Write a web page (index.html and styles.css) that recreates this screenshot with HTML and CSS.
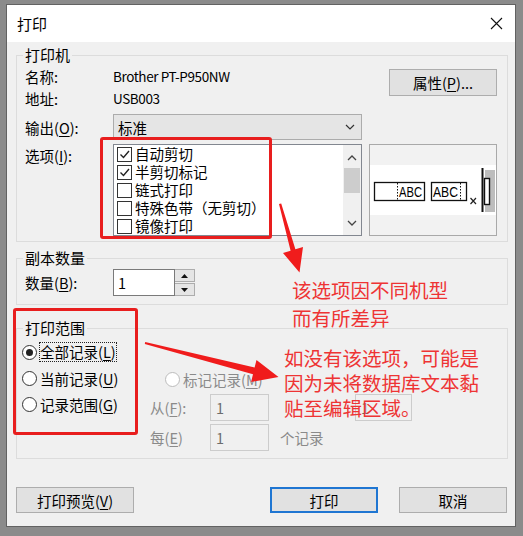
FILE: index.html
```html
<!DOCTYPE html>
<html>
    <head>
        <title>打印</title>
        <meta charset="UTF-8" />
        <link rel="stylesheet" href="styles.css">
    </head>
    <body>
        <div class="dialog">
            <div class="titlebar">
                <span class="title">打印</span>
                <svg class="close" width="13" height="13" viewBox="0 0 13 13">
                    <path d="M1 1L12 12M12 1L1 12" stroke="#111" stroke-width="1.1" fill="none"/>
                </svg>
            </div>
            <div class="content">
                <fieldset class="group printer">
                    <legend>打印机</legend>
                    <div class="printer-top">
                        <div class="info">
                            <div class="row"><span class="label">名称:</span><span class="latin">Brother PT-P950NW</span></div>
                            <div class="row"><span class="label">地址:</span><span class="latin">USB003</span></div>
                        </div>
                        <button class="btn btn-props">属性(<u>P</u>)...</button>
                    </div>
                    <div class="row output">
                        <span class="label">输出(<u>O</u>):</span>
                        <div class="select">
                            <span>标准</span>
                            <svg width="10" height="6" viewBox="0 0 10 6"><path d="M1 1L5 5L9 1" stroke="#333" stroke-width="1.2" fill="none"/></svg>
                        </div>
                    </div>
                    <div class="row options">
                        <span class="label option-label">选项(<u>I</u>):</span>
                        <div class="listbox">
                            <ul class="items">
                                <li><span class="check on"><svg width="13" height="13" viewBox="0 0 13 13"><path d="M2.5 6.5L5.5 9.5L11 3" stroke="#222" stroke-width="1.4" fill="none"/></svg></span>自动剪切</li>
                                <li><span class="check on"><svg width="13" height="13" viewBox="0 0 13 13"><path d="M2.5 6.5L5.5 9.5L11 3" stroke="#222" stroke-width="1.4" fill="none"/></svg></span>半剪切标记</li>
                                <li><span class="check"></span>链式打印</li>
                                <li><span class="check"></span>特殊色带（无剪切）</li>
                                <li><span class="check"></span>镜像打印</li>
                            </ul>
                            <div class="scrollbar">
                                <svg class="arrow-up" width="10" height="6" viewBox="0 0 10 6"><path d="M1 5L5 1L9 5" stroke="#444" stroke-width="1.3" fill="none"/></svg>
                                <div class="thumb"></div>
                                <div class="track"></div>
                                <svg class="arrow-down" width="10" height="6" viewBox="0 0 10 6"><path d="M1 1L5 5L9 1" stroke="#444" stroke-width="1.3" fill="none"/></svg>
                            </div>
                        </div>
                        <svg class="preview" width="128" height="92" viewBox="0 0 128 92">
                            <rect x="0.5" y="0.5" width="127" height="91" fill="#f2f2f2" stroke="#a9a9a9"/>
                            <rect x="1" y="21" width="126" height="50" fill="#fff"/>
                            <rect x="5.5" y="38.5" width="50" height="18" fill="#fff" stroke="#111" stroke-width="1.3"/>
                            <line x1="28.5" y1="39" x2="28.5" y2="56" stroke="#111" stroke-dasharray="1.5 1.5"/>
                            <text x="30" y="53" font-family="Liberation Sans" font-size="14" textLength="23" lengthAdjust="spacingAndGlyphs">ABC</text>
                            <rect x="62.5" y="38.5" width="35" height="18" fill="#fff" stroke="#111" stroke-width="1.3"/>
                            <line x1="91.5" y1="39" x2="91.5" y2="56" stroke="#111" stroke-dasharray="1.5 1.5"/>
                            <text x="64" y="53" font-family="Liberation Sans" font-size="14" textLength="25" lengthAdjust="spacingAndGlyphs">ABC</text>
                            <path d="M101.5 54L107 60M107 54L101.5 60" stroke="#222" stroke-width="1.2"/>
                            <rect x="116" y="26" width="10" height="42" fill="#bdbdbd"/>
                            <line x1="113.5" y1="24" x2="113.5" y2="68" stroke="#111" stroke-width="2"/>
                            <rect x="115.5" y="34.5" width="5" height="26" fill="#fff" stroke="#111" stroke-width="1.4"/>
                        </svg>
                    </div>
                </fieldset>

                <fieldset class="group copies">
                    <legend>副本数量</legend>
                    <div class="row">
                        <span class="label">数量(<u>B</u>):</span>
                        <div class="spin">
                            <div class="spin-input">1</div>
                            <div class="spin-buttons">
                                <div class="spin-btn"><svg width="7" height="4" viewBox="0 0 7 4"><path d="M0 4L3.5 0L7 4Z" fill="#111"/></svg></div>
                                <div class="spin-btn"><svg width="7" height="4" viewBox="0 0 7 4"><path d="M0 0L3.5 4L7 0Z" fill="#111"/></svg></div>
                            </div>
                        </div>
                    </div>
                </fieldset>

                <fieldset class="group range">
                    <legend>打印范围</legend>
                    <div class="range-grid">
                        <div class="radio-list">
                            <div class="radio-row"><span class="radio on"></span><span class="focus">全部记录(<u>L</u>)</span></div>
                            <div class="radio-row"><span class="radio"></span>当前记录(<u>U</u>)</div>
                            <div class="radio-row"><span class="radio"></span>记录范围(<u>G</u>)</div>
                        </div>
                        <div class="range-fields">
                            <div class="radio-row marked"><span class="radio disabled"></span>标记记录(<u>M</u>)</div>
                            <div class="field-row from">
                                <span class="field-label">从(<u>F</u>):</span>
                                <div class="field">1</div>
                                <div class="field to">1</div>
                            </div>
                            <div class="field-row every">
                                <span class="field-label">每(<u>E</u>)</span>
                                <div class="field">1</div>
                                <span class="unit">个记录</span>
                            </div>
                        </div>
                    </div>
                </fieldset>

                <div class="button-row">
                    <button class="btn btn-wide">打印预览(<u>V</u>)</button>
                    <button class="btn btn-default">打印</button>
                    <button class="btn">取消</button>
                </div>
            </div>
        </div>

        <div class="annotations">
            <div class="red-box box-options"></div>
            <div class="red-box box-range"></div>
            <svg class="arrows" width="523" height="536" viewBox="0 0 523 536">
                <polygon points="279,204 281.2,203.4 295.4,249.3 303,247 299.5,272.5 283,253 290.6,250.7" fill="#f01c1c"/>
                <polygon points="145.2,342 254.6,367.4 256.5,360 278.5,377 251.1,382 253,374.2 144.8,344" fill="#f01c1c"/>
            </svg>
            <div class="note note-model">该选项因不同机型<br>而有所差异</div>
            <div class="note note-range">如没有该选项，可能是<br>因为未将数据库文本黏<br>贴至编辑区域。</div>
        </div>
    </body>
</html>
```

FILE: styles.css
```css
body {
    margin: 0;
    padding: 4px 7px 9px 6px;
    background-color: #8b8b8b;
    font-family: "Noto Sans CJK SC", sans-serif;
    font-size: 14.5px;
    color: #000;
}
u {
    text-decoration-thickness: 1px;
    text-underline-offset: 2px;
}
.dialog {
    width: 510px;
    height: 523px;
    box-sizing: border-box;
    border: 1px solid #626262;
    background-color: #f0f0f0;
}
.titlebar {
    height: 37px;
    display: flex;
    align-items: center;
    justify-content: space-between;
    padding: 0 12px 0 10px;
    background-color: #fff;
    font-size: 15px;
}
.content {
    padding: 4px 7px 0 9px;
}
.group {
    margin: 0;
    padding: 1px 10px 5px 8px;
    border: 1px solid #dcdcdc;
    min-width: 0;
}
.group legend {
    padding: 0 2px;
    margin-left: -2px;
    font-size: 15px;
    line-height: 18px;
}
.row {
    display: flex;
    align-items: center;
}
.label {
    width: 88px;
    flex: none;
}
.latin {
    font-size: 13.5px;
    letter-spacing: -0.4px;
}
.printer-top {
    display: flex;
    justify-content: space-between;
    align-items: flex-start;
}
.info .row {
    height: 22px;
}
.btn {
    font-family: inherit;
    font-size: 14.5px;
    color: #000;
    background-color: #e1e1e1;
    border: 1px solid #adadad;
    padding: 0;
    height: 26px;
    width: 108px;
}
.btn-props {
    height: 27px;
    margin-top: 4px;
}
.output {
    margin-top: 5px;
}
.select {
    width: 249px;
    height: 26px;
    box-sizing: border-box;
    display: flex;
    align-items: center;
    justify-content: space-between;
    padding: 0 6px 0 4px;
    background-color: #e5e5e5;
    border: 1px solid #acacac;
}
.options {
    margin-top: 4px;
    align-items: flex-start;
}
.option-label {
    line-height: 24px;
}
.listbox {
    width: 249px;
    height: 92px;
    box-sizing: border-box;
    display: flex;
    background-color: #fff;
    border: 1px solid #828790;
}
.items {
    flex: 1;
    list-style: none;
    margin: 0;
    padding: 0 0 0 3px;
}
.items li {
    height: 18px;
    line-height: 18px;
    display: flex;
    align-items: center;
    white-space: nowrap;
}
.check {
    width: 13px;
    height: 13px;
    border: 1px solid #333;
    margin-right: 3px;
    display: flex;
}
.scrollbar {
    width: 18px;
    display: flex;
    flex-direction: column;
    align-items: center;
    background-color: #f0f0f0;
}
.arrow-up {
    margin-top: 10px;
}
.thumb {
    width: 16px;
    height: 25px;
    margin-top: 7px;
    background-color: #cdcdcd;
}
.track {
    flex: 1;
}
.arrow-down {
    margin-bottom: 9px;
}
.preview {
    margin-left: 7px;
    flex: none;
}
.copies {
    margin-top: 7px;
    padding: 2px 10px 8px 8px;
}
.spin {
    display: flex;
    height: 27px;
}
.spin-input {
    width: 62px;
    box-sizing: border-box;
    border: 1px solid #7a7a7a;
    background-color: #fff;
    padding-left: 4px;
    line-height: 25px;
}
.spin-buttons {
    width: 20px;
    display: flex;
    flex-direction: column;
    gap: 1px;
}
.spin-btn {
    flex: 1;
    display: flex;
    align-items: center;
    justify-content: center;
    background-color: #e5e5e5;
    border: 1px solid #adadad;
    border-left: none;
}
.range {
    margin-top: 14px;
    padding: 2px 10px 7px 8px;
}
.range-grid {
    display: grid;
    grid-template-columns: 125px 1fr;
    align-items: start;
}
.radio-list {
    margin-left: -3px;
}
.radio-row {
    height: 26px;
    display: flex;
    align-items: center;
}
.radio {
    width: 13px;
    height: 13px;
    border: 1px solid #333;
    border-radius: 50%;
    background-color: #fff;
    margin-right: 3px;
    display: flex;
    align-items: center;
    justify-content: center;
}
.radio.on::after {
    content: "";
    width: 7px;
    height: 7px;
    border-radius: 50%;
    background-color: #222;
}
.radio.disabled {
    border-color: #bcbcbc;
}
.focus {
    outline: 1px dotted #222;
    outline-offset: 0;
    line-height: 18px;
}
.range-fields {
    margin-top: 27px;
    color: #8a8a8a;
}
.marked {
    padding-left: 15px;
}
.field-row {
    display: flex;
    align-items: center;
    height: 27px;
}
.from {
    margin-top: 2px;
}
.every {
    margin-top: 3px;
}
.field-label {
    width: 60px;
}
.field {
    width: 59px;
    height: 27px;
    box-sizing: border-box;
    border: 1px solid #cccccc;
    padding-left: 5px;
    line-height: 25px;
    color: #6d6d6d;
}
.field.to {
    width: 57px;
    margin-left: 86px;
}
.unit {
    margin-left: 11px;
}
.button-row {
    margin-top: 28px;
    margin-right: 1px;
    display: flex;
    gap: 21px;
}
.btn-wide {
    width: 118px;
}
.btn-default {
    margin-left: auto;
    border: 2px solid #1f76d2;
}
.annotations {
    position: absolute;
    left: 0;
    top: 0;
    width: 523px;
    height: 536px;
    pointer-events: none;
}
.red-box {
    position: absolute;
    box-sizing: border-box;
    border: 3px solid #e81e1e;
    border-radius: 3px;
}
.box-options {
    left: 100px;
    top: 137px;
    width: 172px;
    height: 102px;
}
.box-range {
    left: 13px;
    top: 308px;
    width: 125px;
    height: 127px;
}
.arrows {
    position: absolute;
    left: 0;
    top: 0;
}
.note {
    position: absolute;
    color: #ee3434;
    font-size: 19.5px;
    white-space: nowrap;
}
.note-model {
    left: 292px;
    top: 276px;
    line-height: 28px;
}
.note-range {
    left: 284px;
    top: 345px;
    line-height: 25px;
}
```
